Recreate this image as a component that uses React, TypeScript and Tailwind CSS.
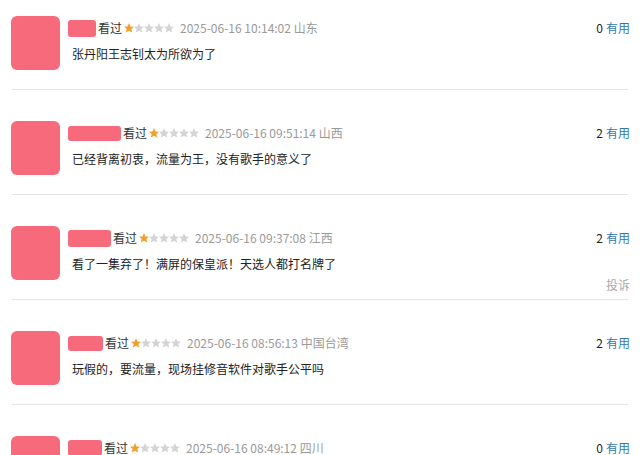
import React from "react";

type Item = {
  nameW: number;
  nameH: number;
  time: string;
  loc: string;
  text: string;
  useful: string;
  report?: boolean;
};

const items: Item[] = [
  { nameW: 28, nameH: 17, time: "2025-06-16 10:14:02", loc: "山东", text: "张丹阳王志钊太为所欲为了", useful: "0" },
  { nameW: 53, nameH: 15, time: "2025-06-16 09:51:14", loc: "山西", text: "已经背离初衷，流量为王，没有歌手的意义了", useful: "2" },
  { nameW: 43, nameH: 17, time: "2025-06-16 09:37:08", loc: "江西", text: "看了一集弃了！满屏的保皇派！天选人都打名牌了", useful: "2", report: true },
  { nameW: 35, nameH: 15, time: "2025-06-16 08:56:13", loc: "中国台湾", text: "玩假的，要流量，现场挂修音软件对歌手公平吗", useful: "2" },
  { nameW: 34, nameH: 16, time: "2025-06-16 08:49:12", loc: "四川", text: "", useful: "0" },
];

function Star({ on }: { on: boolean }) {
  return (
    <svg width="10" height="10" viewBox="1.5 1.5 21 21" className="block">
      <path
        d="M12 1.5l3.1 7.1 7.6.6-5.8 5 1.8 7.5L12 17.8l-6.7 3.9 1.8-7.5-5.8-5 7.6-.6z"
        fill={on ? "#f2a02c" : "#d4d4d4"}
      />
    </svg>
  );
}

function Row({ it }: { it: Item }) {
  return (
    <div className="pt-[16px] mb-[15px]">
      <div className="flex items-start h-[73px]">
        <div className="ml-[11px] w-[49px] h-[54px] rounded-[6px] bg-[#f76a7b] shrink-0" />
        <div className="ml-[8px] flex-1 pt-[3px]">
          <div className="flex items-center h-[18px] text-[12px] leading-[18px]">
            <div
              className="rounded-[3px] bg-[#f76a7b]"
              style={{ width: it.nameW, height: it.nameH }}
            />
            <span className="ml-[2px] text-[#333]">看过</span>
            <span className="ml-[2px] flex">
              <Star on />
              <Star on={false} />
              <Star on={false} />
              <Star on={false} />
              <Star on={false} />
            </span>
            <span className="ml-[6px] text-[#9a9a9a]">
              {it.time} {it.loc}
            </span>
          </div>
          {it.text && (
            <div className="mt-[8px] pl-[4px] text-[12px] leading-[18px] text-[#222]">{it.text}</div>
          )}
        </div>
        <div className="pr-[10px] pt-[3px] flex flex-col items-end text-[12px] leading-[18px]">
          <div className="flex items-center gap-[3px]">
            <span className="text-[#222]">{it.useful}</span>
            <span className="text-[#3377aa]">有用</span>
          </div>
          {it.report && <div className="mt-[29px] text-[#aaaaaa]">投诉</div>}
        </div>
      </div>
      <div className="mx-[12px] h-px bg-[#e6e6e6]" />
    </div>
  );
}

export default function App() {
  return (
    <div
      className="w-[640px] h-[455px] overflow-hidden bg-white"
      style={{ fontFamily: '"Noto Sans CJK SC", "Noto Sans", sans-serif' }}
    >
      {items.map((it, i) => (
        <Row key={i} it={it} />
      ))}
    </div>
  );
}
